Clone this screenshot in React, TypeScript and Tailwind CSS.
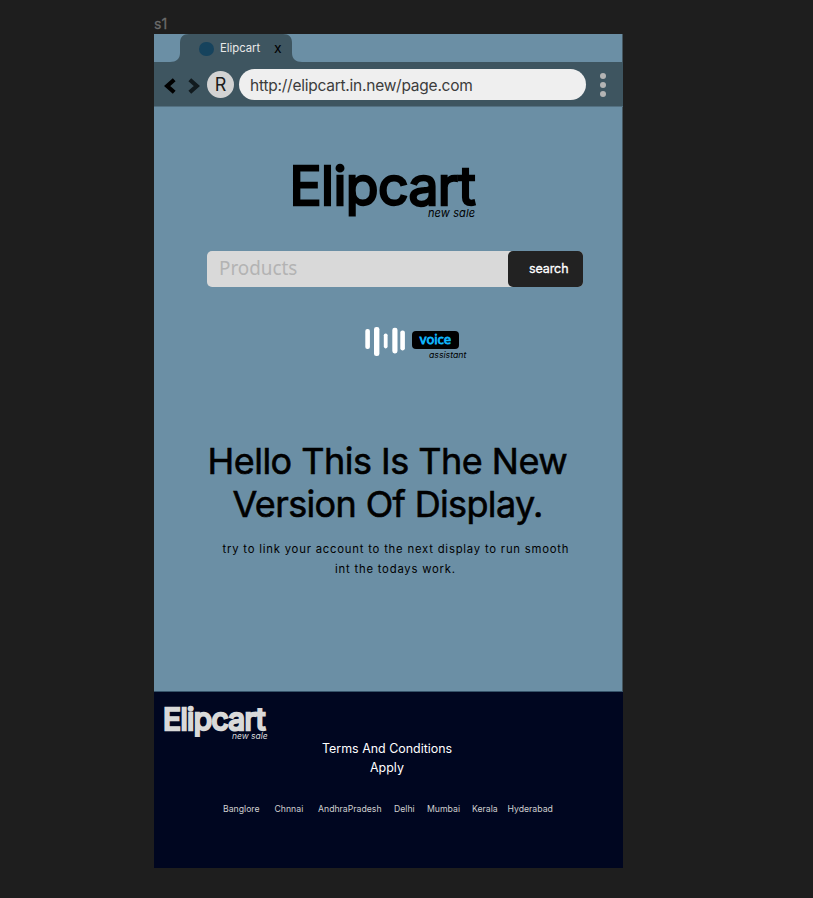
import type { ReactNode } from "react";

const cities = [
  { name: "Banglore", box: "w-[51.5px]" },
  { name: "Chnnai", box: "w-[43.5px]" },
  { name: "AndhraPradesh", box: "w-[76px]" },
  { name: "Delhi", box: "w-[33px]" },
  { name: "Mumbai", box: "w-[45px]" },
  { name: "Kerala", box: "w-[35.5px]" },
  { name: "Hyderabad", box: "w-[50px]" },
];

function Chevron({ className, d, color }: { className: string; d: string; color: string }) {
  return (
    <svg className={className} width="12" height="16" viewBox="0 0 12 16" fill="none">
      <path d={d} stroke={color} strokeWidth="4.2" />
    </svg>
  );
}

function Line({ className, children }: { className: string; children: ReactNode }) {
  return <div className={`whitespace-nowrap ${className}`}>{children}</div>;
}

function TabStrip() {
  return (
    <div className="relative h-7 border-r border-[#45565f] bg-[#6b8fa5]">
      <svg className="absolute left-0 top-0" width="160" height="28" viewBox="0 0 160 28">
        <path
          d="M16 28C22 28 26 25 26 19V9C26 3 29 0 35 0H129C135 0 138 3 138 9V19C138 25 142 28 148 28Z"
          fill="#3e5560"
        />
      </svg>
      <div className="relative flex h-7 items-center pl-[44.5px]">
        <span className="mt-px h-[14px] w-[15px] rounded-full bg-[#16435d]" />
        <span className="ml-[6.5px] w-[54px] text-[11.3px] leading-7 text-[#e8e8e8]">Elipcart</span>
        <span className="text-[14px] leading-7 text-black">x</span>
      </div>
    </div>
  );
}

function Toolbar() {
  return (
    <div className="flex h-[45px] items-start border-b border-[#547182] bg-[#3e5560]">
      <Chevron className="ml-[9.5px] mt-4" d="M10.2 1.8L3.2 8L10.2 14.2" color="#000" />
      <Chevron className="ml-3 mt-4" d="M1.8 1.8L8.8 8L1.8 14.2" color="#111a1e" />
      <div className="ml-[7.5px] mt-[9px] flex h-[27px] w-[27px] items-center justify-center rounded-full bg-[#d3d3d3] text-[18px] text-[#1c1c1c]">
        R
      </div>
      <div className="ml-[5px] mt-[7px] h-[31px] w-[347px] rounded-full bg-[#efefef] pl-[11px] text-[15.5px] leading-[33px] tracking-[-0.24px] text-[#3c3c3c]">
        http://elipcart.in.new/page.com
      </div>
      <div className="ml-[14px] mt-[11px] flex flex-col gap-[3px]">
        <i className="h-[6px] w-[6px] rounded-full bg-[#b4b4b4]" />
        <i className="h-[6px] w-[6px] rounded-full bg-[#b4b4b4]" />
        <i className="h-[6px] w-[6px] rounded-full bg-[#b4b4b4]" />
      </div>
    </div>
  );
}

function VoiceBars() {
  return (
    <svg width="42" height="32" viewBox="0 0 42 32" fill="#fff">
      <rect x="0.3" y="4" width="4.6" height="20" rx="2.1" />
      <rect x="9" y="2" width="5.4" height="29" rx="2.3" />
      <rect x="18.8" y="8.4" width="3.8" height="15" rx="1.8" />
      <rect x="27.3" y="2.8" width="5.2" height="25.6" rx="2.3" />
      <rect x="35.3" y="5.4" width="4.6" height="20" rx="2.1" />
    </svg>
  );
}

export default function App() {
  return (
    <div className="h-[898px] w-[813px] overflow-hidden bg-[#1e1e1e] pl-[154px] pt-[14px] font-['Inter',sans-serif]">
      <Line className="h-5 text-[14px] leading-5 text-[#6b6b6b] [-webkit-text-stroke:0.3px_#6b6b6b]">s1</Line>
      <div className="flex h-[834px] w-[469px] flex-col">
        <TabStrip />
        <Toolbar />
        <main className="h-[584px] border-r border-[#45565f] bg-[#6b8fa5] pt-[51px] text-black">
          <Line className="ml-[135.5px] h-14 text-[53.5px] leading-[55px] tracking-[-0.6px] [-webkit-text-stroke:2.4px_black]">
            Elipcart
          </Line>
          <Line className="-mt-[7px] ml-[274px] h-3 text-[11px] italic leading-3 tracking-[0.1px]">new sale</Line>

          <div className="ml-[53px] mt-[32px] flex h-[36px] w-[376px] rounded-[5px] bg-[#d9d9d9]">
            <div className="w-[301px] pl-[12px] font-['Noto_Sans',sans-serif] text-[20.5px] leading-[33px] text-[#b3b3b3]">
              <span className="inline-block origin-left scale-x-[0.92]">Products</span>
            </div>
            <div className="w-[75px] rounded-[5px] bg-[#222] pl-[21px] text-[12.5px] leading-[35px] tracking-[-0.1px] text-white [-webkit-text-stroke:0.3px_white]">
              search
            </div>
          </div>

          <div className="ml-[211px] mt-[38px] flex h-9">
            <VoiceBars />
            <div className="ml-[5px] mt-[6px]">
              <div className="h-[18px] w-[47px] rounded-[4px] bg-black text-center font-['Noto_Sans',sans-serif] text-[13px] leading-[17px] text-[#0fb8ff] [-webkit-text-stroke:0.8px_#0fb8ff]">
                voice
              </div>
              <Line className="ml-[17px] h-3 text-[8.7px] italic leading-3">assistant</Line>
            </div>
          </div>

          <Line className="ml-[53.5px] mt-[79px] h-[42px] text-[36px] leading-[42px] tracking-[-0.52px] [-webkit-text-stroke:0.6px_black]">
            Hello This Is The New
          </Line>
          <Line className="ml-[78.5px] h-[42px] text-[36px] leading-[44px] tracking-[-0.64px] [-webkit-text-stroke:0.6px_black]">
            Version Of Display.
          </Line>
          <Line className="ml-[68.5px] mt-[15px] h-5 text-[11.3px] leading-5 tracking-[0.79px]">
            try to link your account to the next display to run smooth
          </Line>
          <Line className="ml-[181px] h-5 text-[11.3px] leading-5 tracking-[0.79px]">int the todays work.</Line>
        </main>

        <footer className="h-[177px] border-t border-[#36536a] bg-[#000620] pt-[11px]">
          <Line className="ml-[9px] h-8 text-[30px] leading-8 tracking-[-0.6px] text-[#d9d9d9] [-webkit-text-stroke:2.4px_#d9d9d9]">
            Elipcart
          </Line>
          <Line className="-mt-[5px] ml-[78px] h-3 text-[8.5px] italic leading-3 text-[#d9d9d9]">new sale</Line>
          <Line className="-mt-[3px] ml-[168px] h-[19px] text-[12.45px] leading-[19px] text-white">
            Terms And Conditions
          </Line>
          <Line className="ml-[216px] h-[19px] text-[12.45px] leading-[19px] text-white">Apply</Line>
          <div className="ml-[69px] mt-[24px] flex h-4">
            {cities.map((city) => (
              <span key={city.name} className={`${city.box} shrink-0 whitespace-nowrap text-[8.7px] leading-4 text-[#cfcfcf]`}>
                {city.name}
              </span>
            ))}
          </div>
        </footer>
      </div>
    </div>
  );
}
